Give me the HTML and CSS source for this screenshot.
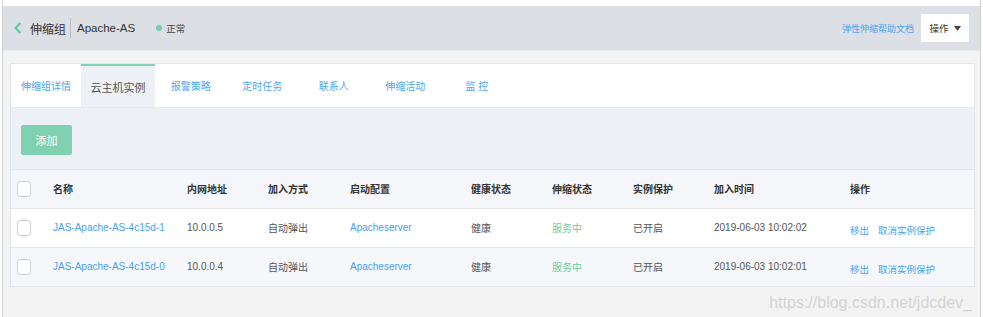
FILE: index.html
```html
<!DOCTYPE html>
<html lang="zh-CN">
<head>
  <meta charset="UTF-8" />
  <meta name="viewport" content="width=device-width, initial-scale=1.0"/>
  <title>伸缩组 - Apache-AS</title>
  <link rel="stylesheet" href="styles.css">
</head>
<body>

  <div class="frame">
    <header class="topbar">
      <div class="crumb">
        <svg class="back" width="8" height="12" viewBox="0 0 8 12"><polyline points="6.5,1 1.5,6 6.5,11" fill="none" stroke="#5cc9a2" stroke-width="2"/></svg>
        <span class="title">伸缩组</span>
        <span class="sep"></span>
        <span class="name">Apache-AS</span>
        <span class="status"><i class="dot"></i>正常</span>
      </div>
      <div class="tools">
        <a class="help" href="#">弹性伸缩帮助文档</a>
        <button class="ops">操作
          <svg width="7" height="5" viewBox="0 0 7 5"><polygon points="0,0 7,0 3.5,5" fill="#444"/></svg>
        </button>
      </div>
    </header>

    <main class="content">
      <section class="card">
        <nav class="tabs">
          <a class="tab first" href="#">伸缩组详情</a>
          <a class="tab active" href="#">云主机实例</a>
          <a class="tab" href="#">报警策略</a>
          <a class="tab" href="#">定时任务</a>
          <a class="tab" href="#">联系人</a>
          <a class="tab" href="#">伸缩活动</a>
          <a class="tab" href="#">监 控</a>
        </nav>

        <div class="toolbar">
          <button class="btn-add">添加</button>
        </div>

        <table class="grid">
          <colgroup>
            <col style="width:42px"><col style="width:134px"><col style="width:81px"><col style="width:82px">
            <col style="width:121px"><col style="width:81px"><col style="width:81px"><col style="width:81px">
            <col style="width:136px"><col>
          </colgroup>
          <thead>
            <tr>
              <th class="chk"><span class="box"></span></th>
              <th>名称</th>
              <th>内网地址</th>
              <th>加入方式</th>
              <th>启动配置</th>
              <th>健康状态</th>
              <th>伸缩状态</th>
              <th>实例保护</th>
              <th>加入时间</th>
              <th>操作</th>
            </tr>
          </thead>
          <tbody>
            <tr>
              <td class="chk"><span class="box"></span></td>
              <td><a href="#">JAS-Apache-AS-4c15d-1</a></td>
              <td>10.0.0.5</td>
              <td>自动弹出</td>
              <td><a href="#">Apacheserver</a></td>
              <td>健康</td>
              <td class="ok">服务中</td>
              <td>已开启</td>
              <td>2019-06-03 10:02:02</td>
              <td class="acts"><a href="#">移出</a><a href="#">取消实例保护</a></td>
            </tr>
            <tr>
              <td class="chk"><span class="box"></span></td>
              <td><a href="#">JAS-Apache-AS-4c15d-0</a></td>
              <td>10.0.0.4</td>
              <td>自动弹出</td>
              <td><a href="#">Apacheserver</a></td>
              <td>健康</td>
              <td class="ok">服务中</td>
              <td>已开启</td>
              <td>2019-06-03 10:02:01</td>
              <td class="acts"><a href="#">移出</a><a href="#">取消实例保护</a></td>
            </tr>
          </tbody>
        </table>
      </section>
    </main>

    <div class="watermark">https://blog.csdn.net/jdcdev_</div>
  </div>

</body>
</html>
```

FILE: styles.css
```css
* {
  box-sizing: border-box;
}
body {
  margin: 0;
  background: #fff;
  font-family: 'Liberation Sans', 'Noto Sans CJK SC', sans-serif;
  font-size: 10px;
  color: #555;
}
a {
  text-decoration: none;
  color: #4a9ff5;
}
.frame {
  position: relative;
  margin-left: 2px;
  width: 979px;
  height: 317px;
  padding-top: 6px;
  border-left: 1px solid #cfd1d4;
  border-right: 1px solid #cfd1d4;
  display: flex;
  flex-direction: column;
}
.topbar {
  height: 45px;
  background: #dcdfe3;
  border-bottom: 1px dotted #f4f5f6;
  display: flex;
  align-items: center;
  justify-content: space-between;
  padding: 0 11px 0 11px;
}
.crumb {
  display: flex;
  align-items: center;
}
.back {
  margin-right: 8px;
}
.title {
  font-size: 12px;
  color: #333;
}
.sep {
  width: 1px;
  height: 20px;
  background: #b8bbbf;
  margin: 0 6px 0 4px;
}
.name {
  font-size: 11.5px;
  color: #333;
}
.status {
  display: flex;
  align-items: center;
  margin-left: 21px;
  font-size: 9.5px;
  color: #444;
}
.dot {
  width: 6px;
  height: 6px;
  border-radius: 50%;
  background: #6fcfaa;
  margin-right: 4px;
}
.tools {
  display: flex;
  align-items: center;
  gap: 7px;
}
.help {
  font-size: 9px;
  color: #4ba4f2;
}
.ops {
  width: 48px;
  height: 28px;
  border: none;
  background: #fff;
  font-family: inherit;
  font-size: 9.5px;
  color: #333;
  display: flex;
  align-items: center;
  justify-content: center;
  gap: 5px;
  padding: 0;
}
.content {
  flex: 1;
  background: #f3f3f4;
  padding: 12px 5px 0 7px;
}
.card {
  background: #fff;
  border: 1px solid #e2e5e9;
}
.tabs {
  display: flex;
  height: 44px;
  border-bottom: 1px solid #e8ebee;
}
.tab {
  width: 71.5px;
  display: flex;
  align-items: center;
  justify-content: center;
  font-size: 10px;
  color: #4ea6f3;
}
.tab.first {
  width: 70px;
}
.tab.active {
  width: 74px;
  background: #edf0f4;
  border-top: 2px solid #7fd3b2;
  font-size: 11px;
  color: #555;
}
.toolbar {
  background: #edf0f4;
  padding: 17px 10px 14px;
  border-bottom: 1px solid #e2e5e9;
}
.btn-add {
  width: 51px;
  height: 30px;
  border: none;
  border-radius: 2px;
  background: #80d1b1;
  color: #fff;
  font-family: inherit;
  font-size: 11px;
  padding: 0;
}
.grid {
  width: 100%;
  border-collapse: collapse;
  table-layout: fixed;
}
.grid th, .grid td {
  text-align: left;
  padding: 0;
  white-space: nowrap;
  border-bottom: 1px solid #e4e7eb;
}
.grid th {
  height: 38px;
  background: #f4f6f9;
  font-weight: bold;
  color: #333;
}
.grid td {
  height: 39px;
}
.grid tbody tr:nth-child(even) td {
  background: #f5f7fa;
}
.grid tbody tr:last-child td {
  border-bottom: none;
}
.chk {
  padding-left: 6px !important;
}
.box {
  display: block;
  width: 14px;
  height: 16px;
  border: 1px solid #cfd3d8;
  border-radius: 3px;
  background: #fff;
}
.ok {
  color: #6ccca1;
}
.acts {
  padding-top: 4px !important;
  font-size: 9.5px;
}
.acts a {
  margin-right: 9px;
}
.watermark {
  position: absolute;
  right: 8px;
  bottom: 6px;
  font-family: 'Liberation Sans', sans-serif;
  font-size: 16px;
  line-height: 1;
  color: #d3d3d3;
}
```
